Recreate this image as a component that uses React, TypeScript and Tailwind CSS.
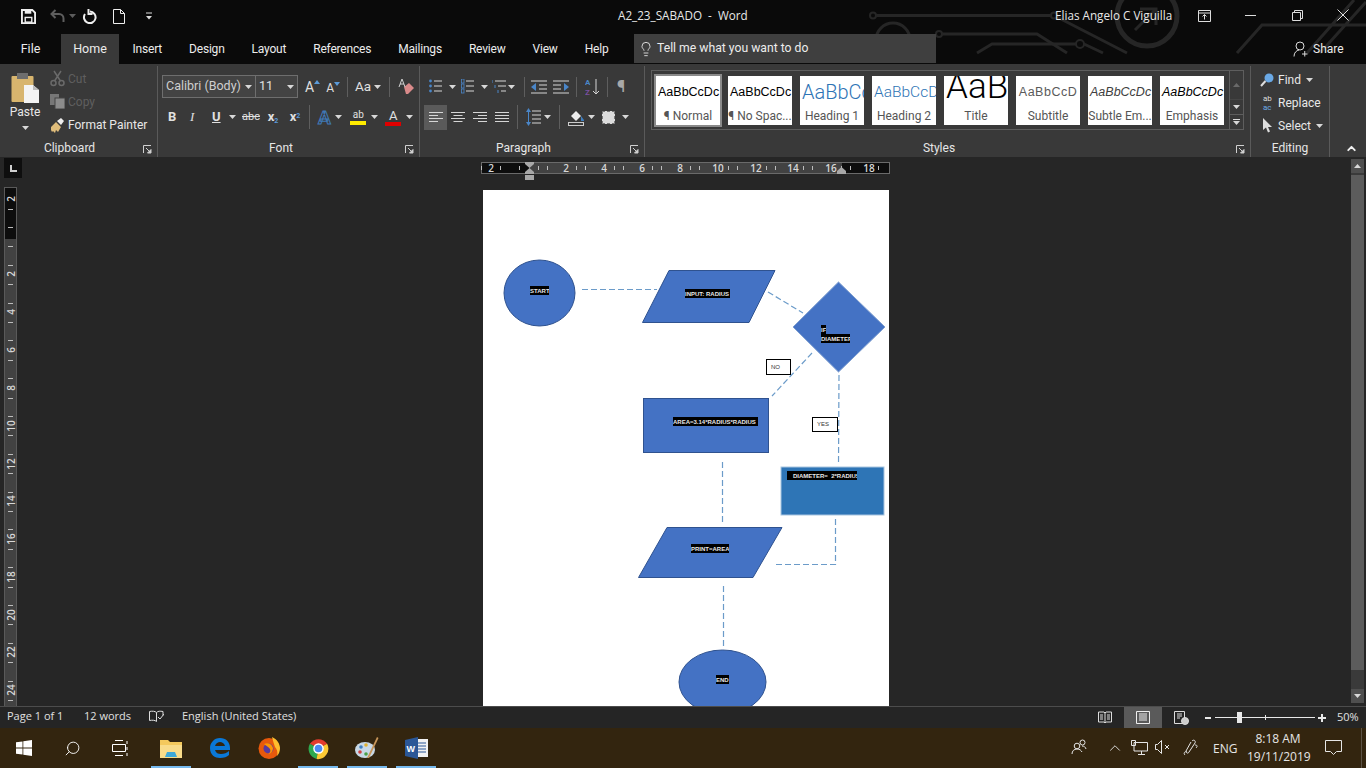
import React from "react";
import { Search, Lightbulb, ChevronUp } from "lucide-react";

const FONT = { fontFamily: '"Open Sans","Noto Sans",sans-serif' };
const UI = { fontFamily: 'Roboto,"Open Sans",sans-serif' };

function Caret({ className = "" }: { className?: string }) {
  return (
    <svg width="7" height="4" viewBox="0 0 7 4" className={"shrink-0 " + className}>
      <path d="M0 0h7L3.500 4z" fill="#d8d8d8" />
    </svg>
  );
}

function Launcher() {
  return (
    <svg width="9" height="9" viewBox="0 0 9 9" className="shrink-0">
      <path d="M.500 8V.500H8" fill="none" stroke="#d0d0d0" />
      <path d="M3 3l5 5M8 4.500V8H4.500z" fill="#d0d0d0" stroke="#d0d0d0" />
    </svg>
  );
}

function Group({ width, title, shift = 14, launcher = true, children }: { width: number; title: string; shift?: number; launcher?: boolean; children: React.ReactNode }) {
  return (
    <div className="relative flex h-full shrink-0 flex-col border-r border-[#5a5a5a]" style={{ width }}>
      <div className="min-h-0 flex-1">{children}</div>
      <div className="flex h-[17px] items-center justify-center pb-[2px] text-[12px] text-[#e6e6e6]" style={{ paddingRight: shift }}>
        {title}
      </div>
      {launcher && (
        <div className="absolute bottom-[3px] right-[5px]">
          <Launcher />
        </div>
      )}
    </div>
  );
}

function Lines({ kind }: { kind: "left" | "center" | "right" | "just" }) {
  const rows: [number, number][] =
    kind === "left"
      ? [[0, 14], [0, 9], [0, 14], [0, 9]]
      : kind === "center"
      ? [[0, 14], [2.500, 11.500], [0, 14], [2.500, 11.500]]
      : kind === "right"
      ? [[0, 14], [5, 14], [0, 14], [5, 14]]
      : [[0, 14], [0, 14], [0, 14], [0, 14]];
  return (
    <svg width="14" height="12" viewBox="0 0 14 12">
      {rows.map((r, i) => (
        <path key={i} d={`M${r[0]} ${1.500 + i * 3}H${r[1]}`} stroke="#d6d6d6" />
      ))}
    </svg>
  );
}

function ListIcon({ kind }: { kind: "bullet" | "num" | "multi" }) {
  return (
    <svg width="15" height="15" viewBox="0 0 15 15" className="shrink-0">
      {kind === "bullet" &&
        [2, 7, 12].map((y) => (
          <React.Fragment key={y}>
            <circle cx="1.500" cy={y} r="1.400" fill="#4a86c8" />
            <path d={`M5 ${y}H13`} stroke="#d6d6d6" />
          </React.Fragment>
        ))}
      {kind === "num" &&
        [2, 7, 12].map((y) => (
          <React.Fragment key={y}>
            <rect x="0.500" y={y - 2} width="2.500" height="4" fill="none" stroke="#4a86c8" strokeWidth="0.800" />
            <path d={`M5 ${y}H13`} stroke="#d6d6d6" />
          </React.Fragment>
        ))}
      {kind === "multi" && (
        <>
          <path d="M0 1v3" stroke="#4a86c8" />
          <path d="M3 2H14M6 7H14M9 12H14" stroke="#d6d6d6" />
          <path d="M3 6v3" stroke="#4a86c8" />
          <path d="M6 11v3" stroke="#4a86c8" />
        </>
      )}
    </svg>
  );
}

function StyleTile({ sample, label, cls, selected, light }: { sample: string; label: string; cls: string; selected?: boolean; light?: boolean }) {
  return (
    <div className={"relative h-[49px] w-[64px] shrink-0 bg-white " + (selected ? "outline outline-2 outline-[#8a8a8a]" : "")}>
      <div
        className={"h-[32px] overflow-hidden whitespace-nowrap px-[2px] text-center " + cls}
        style={{ fontFamily: light ? "Roboto,sans-serif" : '"Liberation Sans",sans-serif' }}
      >
        {sample}
      </div>
      <div className="text-center text-[12px] leading-[16px] text-[#555] whitespace-nowrap" style={UI}>
        {label}
      </div>
    </div>
  );
}

function TitleBar() {
  return (
    <div className="relative flex h-8 items-center text-[11.700px] text-[#e8e8e8]" style={FONT}>
      <svg width="15" height="15" viewBox="0 0 16 16" className="ml-[21px]">
        <path d="M1 1h11l3 3v11H1z" fill="none" stroke="#eee" strokeWidth="2" />
        <rect x="4" y="1" width="7" height="4" fill="#eee" />
        <rect x="4.500" y="9" width="7" height="5" fill="none" stroke="#eee" strokeWidth="1.500" />
      </svg>
      <svg width="15" height="14" viewBox="0 0 15 14" className="ml-[14px]">
        <path d="M5.500 1L1.500 5l4 4M2 5h7a4.500 4.500 0 0 1 4.500 4.500V13" fill="none" stroke="#5e5e5e" strokeWidth="2" />
      </svg>
      <Caret className="ml-[4px] opacity-40" />
      <svg width="15" height="15" viewBox="0 0 15 15" className="ml-[6px]">
        <path d="M8 2.500a5.800 5.800 0 1 1-5 2.500M6.500 0v5h4" fill="none" stroke="#eee" strokeWidth="2" />
      </svg>
      <svg width="12" height="15" viewBox="0 0 12 15" className="ml-[16px]">
        <path d="M.500.500h7l4 4v10h-11zM7.500.500v4h4" fill="none" stroke="#eee" />
      </svg>
      <svg width="8" height="8" viewBox="0 0 8 8" className="ml-[20px]">
        <path d="M1 1h6" stroke="#ddd" />
        <path d="M1 4h6L4 7.500z" fill="#ddd" />
      </svg>
      <div className="absolute left-[618px] top-[7px]">A2_23_SABADO&nbsp; -&nbsp; Word</div>
      <div className="absolute left-[1055px] top-[7px]">Elias Angelo C Viguilla</div>
      <svg width="13" height="12" viewBox="0 0 13 12" className="absolute left-[1198px] top-[10px]" fill="none" stroke="#ddd">
        <path d="M.500.500h12v11H.500zM.500 3h12M6.500 9.500v-5M4.500 6.500l2-2 2 2" />
      </svg>
      <div className="absolute left-[1245px] top-[15px] h-px w-[11px] bg-[#ddd]" />
      <svg width="11" height="11" viewBox="0 0 11 11" className="absolute left-[1292px] top-[10px]" fill="none" stroke="#ddd">
        <path d="M.500 2.500h8v8h-8zM2.500 2.500v-2h8v8h-2" />
      </svg>
      <svg width="12" height="12" viewBox="0 0 12 12" className="absolute left-[1337px] top-[9px]" fill="none" stroke="#ddd">
        <path d="M.500.500l11 11M11.500.500l-11 11" />
      </svg>
    </div>
  );
}

function TabBar() {
  const tabs = ["Insert", "Design", "Layout", "References", "Mailings", "Review", "View", "Help"];
  return (
    <div className="relative flex h-8 items-end text-[12px] text-[#ececec]" style={UI}>
      <div className="flex h-[30px] w-[61px] items-center justify-center text-[12.500px]">File</div>
      <div className="flex h-[30px] w-[58px] items-center justify-center bg-[#393939] text-[12.500px]">Home</div>
      <div className="flex h-[30px] items-center tracking-[-0.200px]">
        {tabs.map((t) => (
          <div key={t} className="px-[13.500px]">
            {t}
          </div>
        ))}
      </div>
      <div className="absolute left-[634px] top-[2px] flex h-[29px] w-[302px] items-center gap-[3px] bg-[#3f3f3f] pl-[4px] text-[12.200px]">
        <Lightbulb size={16} strokeWidth={1.300} />
        Tell me what you want to do
      </div>
      <div className="absolute left-[1293px] top-[8px] flex items-center gap-[5px] text-[12px]">
        <svg width="15" height="16" viewBox="0 0 15 16" fill="none" stroke="#ddd">
          <circle cx="7" cy="5" r="4" />
          <path d="M1 15.500c0-4 2.500-6 5-6.500M9 13h5.500M11.750 10v5.500" />
        </svg>
        Share
      </div>
    </div>
  );
}

function Clipboard() {
  return (
    <div className="flex h-full text-[12px]">
      <div className="flex w-[50px] flex-col items-center pt-[7px]">
        <svg width="28" height="30" viewBox="0 0 28 30">
          <rect x="0.500" y="3" width="22" height="26" rx="1" fill="#d8b56e" />
          <rect x="6" y="0" width="11" height="6" fill="#6e6e6e" />
          <path d="M13 12h9l6 5v13H13z" fill="#f4f4f4" />
          <path d="M22 12v5h6" fill="#bbb" />
        </svg>
        <div className="mt-[1px] leading-[16px] text-[#e8e8e8]">Paste</div>
        <Caret className="mt-[6px]" />
      </div>
      <div className="flex flex-col pt-[1px]">
        <div className="flex h-[23px] items-center gap-[3px] text-[#5f5f5f]">
          <svg width="15" height="17" viewBox="0 0 15 17" fill="none" stroke="#6a6a6a" strokeWidth="1.500">
            <circle cx="3.500" cy="13" r="2.500" />
            <circle cx="11.500" cy="13" r="2.500" />
            <path d="M4.500 11L11 1M10.500 11L4 1" />
          </svg>
          Cut
        </div>
        <div className="flex h-[23px] items-center gap-[3px] text-[#5f5f5f]">
          <svg width="15" height="15" viewBox="0 0 15 15" fill="#777">
            <rect x="0" y="0" width="9" height="11" />
            <rect x="5" y="4" width="10" height="11" fill="#8c8c8c" stroke="#444" />
          </svg>
          Copy
        </div>
        <div className="flex h-[23px] items-center gap-[3px] text-[#e8e8e8]">
          <svg width="15" height="16" viewBox="0 0 15 16">
            <path d="M1 10l5-5 5 5-3 5-2-2-1 3-2-2-1 1-1-2z" fill="#e0bd7b" />
            <path d="M7 4l4-3 3 3-3 4z" fill="#eee" />
          </svg>
          Format Painter
        </div>
      </div>
    </div>
  );
}

function GrowA({ up, size }: { up: boolean; size: number }) {
  return (
    <span className="relative inline-block leading-none" style={{ fontSize: size }}>
      A
      <svg width="6" height="4" viewBox="0 0 6 4" className="absolute -right-[6px] top-0">
        <path d={up ? "M0 4L3 0l3 4z" : "M0 0h6L3 4z"} fill="#5c9bd9" />
      </svg>
    </span>
  );
}

function Font() {
  return (
    <div className="flex h-full flex-col pl-[4px] text-[#e0e0e0]">
      <div className="mt-[9px] flex h-[23px] items-center">
        <div className="flex h-[23px] w-[94px] shrink-0 items-center justify-between border border-[#6e6e6e] bg-[#434343] px-[3px] text-[12.500px]">
          <span className="whitespace-nowrap text-[#cfcfcf]">Calibri (Body)</span>
          <Caret />
        </div>
        <div className="flex h-[23px] w-[42px] shrink-0 items-center justify-between border border-l-0 border-[#6e6e6e] bg-[#434343] px-[3px] text-[12.500px]">
          <span>11</span>
          <Caret />
        </div>
        <div className="flex w-[49px] shrink-0 items-center pl-[7px]">
          <GrowA up size={14} />
          <span className="ml-[12px]"><GrowA up={false} size={12} /></span>
        </div>
        <div className="h-[20px] w-px bg-[#5e5e5e]" />
        <div className="flex w-[41px] shrink-0 items-center gap-[3px] pl-[7px] text-[13.500px]">Aa<Caret /></div>
        <div className="h-[20px] w-px bg-[#5e5e5e]" />
        <svg width="16" height="18" viewBox="0 0 16 18" className="ml-[8px]">
          <path d="M6 9l5-4 5 5-6 6H8z" fill="#d98a8a" />
          <path d="M1 9L4 1l3 8M2 6h4" fill="none" stroke="#d0d0d0" />
        </svg>
      </div>
      <div className="mt-[7px] flex h-[24px] items-center text-[13px]">
        <span className="ml-[6px] w-[22px] font-bold">B</span>
        <span className="w-[22px] italic" style={{ fontFamily: '"Liberation Serif",serif' }}>I</span>
        <span className="w-[15px] font-bold underline">U</span>
        <Caret className="ml-[2px] mr-[6px]" />
        <span className="w-[20px] text-[11px] line-through">abc</span>
        <span className="w-[22px] text-center font-bold">x<sub className="text-[7px] text-[#5c9bd9]">2</sub></span>
        <span className="w-[22px] text-center font-bold">x<sup className="text-[7px] text-[#5c9bd9]">2</sup></span>
        <div className="ml-[3px] h-[24px] w-px bg-[#5e5e5e]" />
        <span className="ml-[8px] text-[19px] font-bold leading-none text-transparent [-webkit-text-stroke:1px_#3f78b5]">A</span>
        <Caret className="ml-[4px]" />
        <div className="ml-[8px] flex w-[17px] flex-col items-center">
          <span className="text-[10px] leading-[12px]">ab</span>
          <div className="h-[4px] w-[16px] bg-[#ffeb00]" />
        </div>
        <Caret className="ml-[4px]" />
        <div className="ml-[7px] flex w-[17px] flex-col items-center">
          <span className="text-[13px] leading-[13px]">A</span>
          <div className="h-[4px] w-[16px] bg-[#e00000]" />
        </div>
        <Caret className="ml-[4px]" />
      </div>
    </div>
  );
}

function Paragraph() {
  return (
    <div className="flex h-full flex-col pl-[9px]">
      <div className="mt-[9px] flex h-[23px] items-center">
        <ListIcon kind="bullet" />
        <Caret className="ml-[5px] mr-[5px]" />
        <ListIcon kind="num" />
        <Caret className="ml-[5px] mr-[4px]" />
        <ListIcon kind="multi" />
        <Caret className="ml-[1px] mr-[9px]" />
        <div className="h-[20px] w-px bg-[#5e5e5e]" />
        <svg width="16" height="14" viewBox="0 0 16 14" className="ml-[6px]">
          <path d="M0 1h16M8 5h8M8 9h8M0 13h16" stroke="#d6d6d6" />
          <path d="M0 7l5-4v8z" fill="#4a86c8" />
        </svg>
        <svg width="16" height="14" viewBox="0 0 16 14" className="ml-[6px]">
          <path d="M0 1h16M0 5h8M0 9h8M0 13h16" stroke="#d6d6d6" />
          <path d="M16 7l-5-4v8z" fill="#4a86c8" />
        </svg>
        <div className="ml-[7px] h-[20px] w-px bg-[#5e5e5e]" />
        <svg width="15" height="20" viewBox="0 0 15 20" className="ml-[8px]">
          <text x="0" y="8" fontSize="8" fill="#4a86c8" fontWeight="700">A</text>
          <text x="0" y="18" fontSize="8" fill="#7a4fa0" fontWeight="700">Z</text>
          <path d="M11 2v15M8 14l3 3 3-3" stroke="#d6d6d6" fill="none" />
        </svg>
        <div className="ml-[7px] h-[20px] w-px bg-[#5e5e5e]" />
        <span className="ml-[9px] text-[17px] leading-none text-[#a8a8a8]">¶</span>
      </div>
      <div className="mt-[7px] flex h-[24px] items-center">
        <div className="-ml-[5px] flex h-[25px] w-[23px] items-center justify-center bg-[#5a5a5a]"><Lines kind="left" /></div>
        <div className="flex w-[22px] justify-center"><Lines kind="center" /></div>
        <div className="flex w-[22px] justify-center"><Lines kind="right" /></div>
        <div className="flex w-[22px] justify-center"><Lines kind="just" /></div>
        <div className="ml-[4px] h-[24px] w-px bg-[#5e5e5e]" />
        <svg width="15" height="18" viewBox="0 0 15 18" className="ml-[8px]">
          <path d="M6 3h9M6 7h9M6 11h9M6 15h9" stroke="#d6d6d6" />
          <path d="M2.500 0l2.500 4H0zM2.500 18L0 14h5zM2 3h1v12H2z" fill="#4a86c8" />
        </svg>
        <Caret className="ml-[3px]" />
        <div className="ml-[8px] h-[24px] w-px bg-[#5e5e5e]" />
        <svg width="17" height="18" viewBox="0 0 17 18" className="ml-[8px]">
          <path d="M3 8l5-5 5 5-5 5z" fill="#eee" />
          <path d="M13 8l3 4v1h-3z" fill="#3f7fc0" />
          <rect x="0.500" y="14.500" width="15" height="3" fill="none" stroke="#ccc" />
        </svg>
        <Caret className="ml-[3px]" />
        <div className="ml-[7px] h-[13px] w-[13px] border border-dashed border-[#777] bg-[#dcdcdc]" />
        <Caret className="ml-[7px]" />
      </div>
    </div>
  );
}

function Styles() {
  return (
    <div className="pl-[6px] pt-[4px]">
      <div className="flex h-[60px] w-[593px] border border-[#5e5e5e]">
        <div className="flex flex-1 gap-[8px] pl-[4px] pt-[5px]">
          <StyleTile selected sample="AaBbCcDc" label="¶ Normal" cls="text-[12.500px] leading-[33px] text-black" />
          <StyleTile sample="AaBbCcDc" label="¶ No Spac..." cls="text-[12.500px] leading-[33px] text-black" />
          <StyleTile light sample="AaBbCc" label="Heading 1" cls="text-[20px] font-light leading-[33px] text-[#2e74b5]" />
          <StyleTile light sample="AaBbCcD" label="Heading 2" cls="text-[15.500px] font-light leading-[33px] text-[#2e74b5]" />
          <StyleTile light sample="AaB" label="Title" cls="text-[35px] font-light leading-[22px] text-black" />
          <StyleTile sample="AaBbCcD" label="Subtitle" cls="text-[12.500px] tracking-[.5px] leading-[33px] text-[#5a5a5a]" />
          <StyleTile sample="AaBbCcDc" label="Subtle Em..." cls="text-[12.500px] italic leading-[33px] text-[#404040]" />
          <StyleTile sample="AaBbCcDc" label="Emphasis" cls="text-[12.500px] italic leading-[33px] text-black" />
        </div>
        <div className="flex w-[14px] flex-col border-l border-[#5e5e5e]">
          <div className="flex h-[29px] items-center justify-center border-b border-[#5e5e5e] opacity-30"><Caret className="rotate-180" /></div>
          <div className="flex h-[15px] items-center justify-center border-b border-[#5e5e5e]"><Caret /></div>
          <div className="flex flex-1 flex-col items-center justify-center gap-[1px]"><div className="h-px w-[7px] bg-[#ddd]" /><Caret /></div>
        </div>
      </div>
    </div>
  );
}

function EditRow({ icon, text, caret }: { icon: React.ReactNode; text: string; caret?: boolean }) {
  return (
    <div className="flex h-[23px] items-center gap-[3px] text-[12px] text-[#e8e8e8]">
      <div className="flex w-[16px] justify-center">{icon}</div>
      {text}
      {caret && <Caret className="ml-[2px]" />}
    </div>
  );
}

function Editing() {
  return (
    <div className="pl-[8px] pt-[2px]">
      <EditRow
        caret
        text="Find"
        icon={
          <svg width="14" height="14" viewBox="0 0 14 14">
            <circle cx="9" cy="5" r="4.500" fill="#6aa9e6" />
            <path d="M5.500 8L1 13" stroke="#ddd" strokeWidth="2" />
          </svg>
        }
      />
      <EditRow
        text="Replace"
        icon={
          <svg width="15" height="18" viewBox="0 0 15 18">
            <text x="3" y="7" fontSize="8" fill="#ddd">ab</text>
            <text x="3" y="16" fontSize="8" fill="#6aa9e6">ac</text>
          </svg>
        }
      />
      <EditRow
        caret
        text="Select"
        icon={
          <svg width="11" height="15" viewBox="0 0 11 15">
            <path d="M1 0v12l3-2.500 2 5 2-1-2-4.500h4z" fill="#ddd" />
          </svg>
        }
      />
    </div>
  );
}

function Ribbon() {
  return (
    <div className="relative flex h-[93px] bg-[#393939] pt-[2px]" style={UI}>
      <Group width={158} title="Clipboard" shift={18}><Clipboard /></Group>
      <Group width={262} title="Font" shift={15}><Font /></Group>
      <Group width={225} title="Paragraph" shift={17}><Paragraph /></Group>
      <Group width={606} title="Styles" shift={17}><Styles /></Group>
      <Group width={79} title="Editing" shift={0} launcher={false}><Editing /></Group>
      <ChevronUp size={13} strokeWidth={3.500} color="#f0f0f0" className="absolute left-[1345px] top-[78px]" />
    </div>
  );
}

const HNUMS: [number, string][] = [
  [491, "2"], [566, "2"], [604, "4"], [642, "6"], [680, "8"], [718, "10"], [756, "12"], [793, "14"], [831, "16"], [869, "18"],
];

function HRuler() {
  const ticks = [481, 500, 519, 547, 585, 623, 661, 699, 737, 775, 812, 850];
  const ticks2 = [538, 576, 614, 652, 690, 728, 766, 803, 841, 878];
  return (
    <div className="absolute left-[481px] top-[5px] flex h-[12px] w-[409px] border border-[#6a6a6a] bg-[#424242]" style={FONT}>
      <div className="h-full w-[47px] bg-[#0d0d0d]" />
      <div className="flex-1" />
      <div className="h-full w-[47px] bg-[#0d0d0d]" />
      {[...ticks, ...ticks2].map((x) => (
        <div key={x} className="absolute top-[3px] h-[4px] w-px bg-[#bdbdbd]" style={{ left: x - 482 }} />
      ))}
      {HNUMS.map(([x, n]) => (
        <div key={x} className="absolute top-[-2px] w-[20px] text-center text-[10px] font-semibold leading-[14px] text-[#d8d8d8]" style={{ left: x - 492 }}>
          {n}
        </div>
      ))}
      <svg width="11" height="18" viewBox="0 0 11 18" className="absolute left-[42px] top-[-1px] overflow-visible">
        <path d="M1 0h9v2L5.500 6 1 2z" fill="#a8a8a8" />
        <path d="M5.500 6L10 10v2H1v-2z" fill="#a8a8a8" />
        <rect x="1" y="13" width="9" height="5" fill="#a8a8a8" />
      </svg>
      <svg width="9" height="7" viewBox="0 0 9 7" className="absolute left-[355px] top-[4px]">
        <path d="M4.500 0L9 4v3H0V4z" fill="#a8a8a8" />
      </svg>
    </div>
  );
}

const VNUMS: [number, string][] = [
  [199, "2"], [274, "2"], [312, "4"], [350, "6"], [388, "8"], [426, "10"], [464, "12"], [501, "14"], [539, "16"], [577, "18"], [615, "20"], [652, "22"], [690, "24"],
];

function VRuler() {
  const ticks: number[] = [];
  for (let i = 0; i < 14; i++) {
    ticks.push(208.500 + i * 37.800);
    ticks.push(227 + i * 37.800);
  }
  return (
    <div className="absolute left-[4px] top-[30px] h-[520px] w-[13px] overflow-hidden border-x border-t border-[#5a5a5a] bg-[#424242]" style={FONT}>
      <div className="h-[51px] w-full bg-[#0d0d0d]" />
      {ticks.map((y) => (
        <div key={y} className="absolute left-[3px] h-px w-[5px] bg-[#bdbdbd]" style={{ top: y - 188 }} />
      ))}
      {VNUMS.map(([y, n]) => (
        <div key={y} className="absolute left-[-4px] w-[20px] -rotate-90 text-center text-[10px] font-semibold leading-[12px] text-[#d8d8d8]" style={{ top: y - 194 }}>
          {n}
        </div>
      ))}
    </div>
  );
}

function Label({ x, y, w, h, children, cls = "" }: { x: number; y: number; w: number; h: number; children: React.ReactNode; cls?: string }) {
  return (
    <div
      className={"absolute flex items-center overflow-hidden whitespace-nowrap bg-black text-[6px] font-bold leading-none text-[#e8e8e8] " + cls}
      style={{ left: x - 483, top: y - 190, width: w, height: h, fontFamily: '"Liberation Sans",sans-serif' }}
    >
      {children}
    </div>
  );
}

function BoxLabel({ x, y, w, h, children }: { x: number; y: number; w: number; h: number; children: React.ReactNode }) {
  return (
    <div
      className="absolute flex items-center whitespace-nowrap border border-black bg-white pl-[4px] text-[6px] text-[#333]"
      style={{ left: x - 483, top: y - 190, width: w, height: h, fontFamily: '"Liberation Sans",sans-serif' }}
    >
      {children}
    </div>
  );
}

function Page() {
  const stroke = "#2f528f";
  const dash = { fill: "none", stroke: "#6b9bc9", strokeWidth: 1.200, strokeDasharray: "6 3" };
  return (
    <div className="absolute left-[483px] top-[33px] h-[516px] w-[406px] overflow-hidden bg-white">
      <svg width="406" height="516" viewBox="483 190 406 516" className="absolute inset-0">
        <path d="M582 289.500H657" {...dash} />
        <path d="M768 292L803 313" {...dash} />
        <path d="M812 353L772 396" {...dash} />
        <path d="M839 375L838.500 464" {...dash} />
        <path d="M722.500 462V523" {...dash} />
        <path d="M835.500 519V564.500H774" {...dash} />
        <path d="M723.500 586V647" {...dash} />
        <ellipse cx="539.500" cy="293" rx="35.500" ry="33" fill="#4472c4" stroke={stroke} />
        <path d="M669 270.500H775L749 322.500H642.500z" fill="#4472c4" stroke={stroke} />
        <path d="M838.500 282L885 327L838.500 372L793 327z" fill="#4472c4" stroke="#7f9fd0" />
        <rect x="643.500" y="398.500" width="125" height="54" fill="#4472c4" stroke={stroke} />
        <rect x="781" y="467" width="103" height="48" fill="#2e75b6" stroke="#a8c5e0" />
        <path d="M667 527.500H782L753 577.500H638.500z" fill="#4472c4" stroke={stroke} />
        <ellipse cx="722.500" cy="682" rx="43.500" ry="32" fill="#4472c4" stroke={stroke} />
      </svg>
      <Label x={530} y={286} w={19} h={9}>START</Label>
      <Label x={685} y={289} w={45} h={9}>INPUT: RADIUS</Label>
      <Label x={821} y={325} w={5} h={9}>IF</Label>
      <Label x={821} y={334} w={29} h={9}>DIAMETER</Label>
      <Label x={673} y={417} w={85} h={9}>AREA=3.14*RADIUS*RADIUS</Label>
      <Label x={787} y={471} w={70} h={9} cls="pl-[6px]">DIAMETER=&nbsp; 2*RADIUS</Label>
      <Label x={691} y={544} w={38} h={9}>PRINT=AREA</Label>
      <Label x={716} y={675} w={13} h={9}>END</Label>
      <BoxLabel x={766} y={359} w={25} h={16}>NO</BoxLabel>
      <BoxLabel x={812} y={417} w={26} h={15}>YES</BoxLabel>
    </div>
  );
}

function Scrollbar() {
  return (
    <div className="absolute left-[1351px] top-[2px] flex h-[544px] w-[13px] flex-col bg-[#3a3a3a]">
      <div className="flex h-[14px] items-center justify-center bg-[#4f4f4f]"><Caret className="rotate-180" /></div>
      <div className="mt-[2px] h-[495px] bg-[#5c5c5c]" />
      <div className="flex-1" />
      <div className="flex h-[14px] items-center justify-center bg-[#4f4f4f]"><Caret /></div>
    </div>
  );
}

function Document() {
  return (
    <div className="relative h-[549px] overflow-hidden bg-[#262626]">
      <div className="absolute left-[4px] top-[1px] flex h-[20px] w-[18px] items-center justify-center bg-[#0e0e0e]">
        <svg width="7" height="7" viewBox="0 0 7 7"><path d="M0 0h2v5h5v2H0z" fill="#cfcfcf" /></svg>
      </div>
      <HRuler />
      <VRuler />
      <Page />
      <Scrollbar />
    </div>
  );
}

function StatusBar() {
  return (
    <div className="relative flex h-[22px] items-center border-t border-[#4c4c4c] bg-[#252525] pb-[2px] text-[11px] text-[#e0e0e0]" style={FONT}>
      <span className="ml-[7px] w-[77px]">Page 1 of 1</span>
      <span className="w-[65px]">12 words</span>
      <svg width="15" height="13" viewBox="0 0 15 13" fill="none" stroke="#ddd">
        <path d="M7.500 2.500C6 1 3 1 .500 1.500v9c2.500-.5 5.500-.5 7 1M7.500 11.500V2.500C9 1 11 1 14 1.500v4M9 7l2 2 4-5" />
      </svg>
      <span className="ml-[18px]">English (United States)</span>
      <svg width="14" height="13" viewBox="0 0 14 13" fill="none" stroke="#ddd" className="absolute left-[1098px] top-[4px]">
        <path d="M.500 1h5.500l1 1 1-1h5.500v10H8l-1 1-1-1H.500zM7 2v9M2 4h3M2 6h3M2 8h3M9 4h3M9 6h3M9 8h3" />
      </svg>
      <div className="absolute left-[1124px] top-0 flex h-[21px] w-[38px] items-center justify-center bg-[#5a5a5a]">
        <svg width="14" height="13" viewBox="0 0 14 13" fill="none" stroke="#eee">
          <path d="M.500.500h13v12h-13zM3 3h8M3 5h8M3 7h8M3 9h8" />
        </svg>
      </div>
      <svg width="15" height="14" viewBox="0 0 15 14" fill="none" stroke="#ddd" className="absolute left-[1174px] top-[4px]">
        <path d="M.500.500h10v12h-10zM3 3h5M3 5h5M3 7h3" />
        <circle cx="11" cy="10" r="3.500" fill="#ccc" />
      </svg>
      <div className="absolute left-[1205px] top-[10px] h-[2px] w-[6px] bg-[#e8e8e8]" />
      <div className="absolute left-[1215px] top-[10px] h-px w-[100px] bg-[#e8e8e8]" />
      <div className="absolute left-[1265px] top-[8px] h-[5px] w-px bg-[#e8e8e8]" />
      <div className="absolute left-[1237px] top-[5px] h-[11px] w-[5px] bg-[#e8e8e8]" />
      <div className="absolute left-[1318px] top-[10px] h-[2px] w-[8px] bg-[#e8e8e8]" />
      <div className="absolute left-[1321px] top-[7px] h-[8px] w-[2px] bg-[#e8e8e8]" />
      <span className="absolute left-[1337px] top-[2px]">50%</span>
    </div>
  );
}

function Taskbar() {
  return (
    <div className="relative flex h-10 items-center bg-[#33250f] text-[12px] text-[#e6e6e6]" style={FONT}>
      <svg width="16" height="16" viewBox="0 0 16 16" className="ml-[16px]" fill="#fff">
        <path d="M0 2.300l6.500-.9v6.200H0zM7.300 1.300L16 0v7.600H7.300zM0 8.400h6.500v6.200L0 13.700zM7.300 8.400H16V16l-8.700-1.200z" />
      </svg>
      <Search size={17} strokeWidth={1.300} color="#fff" className="ml-[32px] -scale-x-100" />
      <svg width="17" height="17" viewBox="0 0 17 17" fill="none" stroke="#fff" className="ml-[31px]">
        <path d="M3 .500h8M.500 4.500h13v7H.500zM3 15.500h8M15 1v3M15 7v3M15 13v3" />
      </svg>
      <div className="relative ml-[22px] flex h-10 w-[40px] items-center justify-center">
        <svg width="22" height="19" viewBox="0 0 22 19">
          <path d="M0 1h8l2 2h12v16H0z" fill="#f4c95d" />
          <path d="M0 6h22v13H0z" fill="#f9dc8a" />
          <path d="M7 13h8l2 5H5z" fill="#3ea8d8" />
        </svg>
        <div className="absolute bottom-0 h-[2px] w-full bg-[#76b9ed]" />
      </div>
      <div className="ml-[9px] flex w-[40px] justify-center">
        <svg width="22" height="22" viewBox="0 0 22 22">
          <path d="M11 1C5 1 1 6 1 11c0 7 5 10 10 10 4 0 7-1 9-3v-4c-2 2-5 3-8 3-3 0-5-1-6-4h15v-2C21 5 17 1 11 1zM6 9c1-3 3-4 5-4s4 1 5 4z" fill="#0a78d7" />
        </svg>
      </div>
      <div className="ml-[9px] flex w-[40px] justify-center">
        <svg width="24" height="24" viewBox="0 0 24 24">
          <circle cx="12" cy="12.500" r="10.500" fill="#e8590c" />
          <path d="M15 1c5 2 8 7 8 11 0 3-1 6-3 8 1-4 0-7-2-9-1-3-2-6-3-10z" fill="#ffbd2e" />
          <circle cx="11.500" cy="12.500" r="5" fill="#5a3a9e" />
          <path d="M7 8c4-2 8 0 9 4 0 3-2 6-5 6 2-1 3-3 2-5-1-2-4-3-6-5z" fill="#ff9500" />
        </svg>
      </div>
      <div className="relative ml-[9px] flex h-10 w-[40px] items-center justify-center">
        <svg width="23" height="23" viewBox="0 0 24 24">
          <path d="M12 12L3 7a11 11 0 0 1 18 0z" fill="#e33b2e" />
          <path d="M12 12L3 7a11 11 0 0 0 7 16z" fill="#2fa84f" />
          <path d="M12 12l9-5a11 11 0 0 1-11 16z" fill="#fcc934" />
          <circle cx="12" cy="12" r="5.500" fill="#fff" />
          <circle cx="12" cy="12" r="4" fill="#4a8af4" />
        </svg>
        <div className="absolute bottom-0 h-[2px] w-full bg-[#76b9ed]" />
      </div>
      <div className="relative ml-[9px] flex h-10 w-[40px] items-center justify-center">
        <svg width="24" height="24" viewBox="0 0 24 24">
          <ellipse cx="10" cy="14" rx="10" ry="8" fill="#c8d8e6" />
          <circle cx="6" cy="11" r="1.800" fill="#3f7fc0" />
          <circle cx="11" cy="9" r="1.800" fill="#e0b030" />
          <circle cx="5" cy="16" r="1.800" fill="#d04040" />
          <circle cx="11" cy="18" r="1.800" fill="#48a048" />
          <path d="M12 22L22 1l1.500 1L14 22z" fill="#c8965a" />
        </svg>
        <div className="absolute bottom-0 h-[2px] w-full bg-[#76b9ed]" />
      </div>
      <div className="relative ml-[9px] flex h-10 w-[40px] items-center justify-center">
        <svg width="23" height="22" viewBox="0 0 23 22">
          <path d="M9 2h14v18H9z" fill="#f2f2f2" />
          <path d="M13 6h8M13 9h8M13 12h8M13 15h8" stroke="#2b5797" />
          <path d="M0 3l13-3v22L0 19z" fill="#2b5797" />
          <text x="1.500" y="15" fontSize="9" fontWeight="700" fill="#fff" style={{ fontFamily: '"Liberation Sans",sans-serif' }}>W</text>
        </svg>
        <div className="absolute bottom-0 h-[2px] w-full bg-[#76b9ed]" />
      </div>

      <svg width="16" height="16" viewBox="0 0 16 16" fill="none" stroke="#e6e6e6" className="absolute left-[1071px] top-[11px]">
        <circle cx="6" cy="7" r="2.800" />
        <circle cx="11.500" cy="3.500" r="2.500" />
        <path d="M1 15c0-3 2-5 5-5s4 1.500 5 3M11 7c2 0 3.500 1 4 3" />
      </svg>
      <ChevronUp size={18} strokeWidth={1.200} color="#e6e6e6" className="absolute left-[1106px] top-[11px]" />
      <svg width="17" height="15" viewBox="0 0 17 15" fill="none" stroke="#e6e6e6" className="absolute left-[1131px] top-[12px]">
        <path d="M3 2.500H16.500V11H3zM.500.500h4v5h-4zM7 14.500h7M10.500 11v3" />
      </svg>
      <svg width="16" height="14" viewBox="0 0 16 14" fill="none" stroke="#e6e6e6" className="absolute left-[1155px] top-[12px]">
        <path d="M.500 4.500h2L6.500.500v13l-4-4h-2zM10 5l4 4M14 5l-4 4" />
      </svg>
      <svg width="17" height="18" viewBox="0 0 17 18" fill="none" stroke="#e6e6e6" className="absolute left-[1183px] top-[11px]">
        <path d="M9 2c2-2 4 0 3 2L6 13c-1 2-3 1-3-1l5-9M2 16c-2-2 0-4 2-3M12 6c2 0 3 1 1 3" />
      </svg>
      <span className="absolute left-[1213px] top-[12px]">ENG</span>
      <div className="absolute left-[1247px] top-[2px] w-[62px] text-center text-[12px] leading-[18px]">
        <div>8:18 AM</div>
        <div>19/11/2019</div>
      </div>
      <svg width="17" height="16" viewBox="0 0 17 16" fill="none" stroke="#e6e6e6" className="absolute left-[1325px] top-[12px]">
        <path d="M.500.500h16v11h-5l-3 3-3-3h-5z" />
      </svg>
      <div className="absolute left-[1361px] top-0 h-10 w-px bg-[#5c5244]" />
    </div>
  );
}

export default function App() {
  return (
    <div className="h-[768px] w-[1366px] overflow-hidden bg-[#262626]" style={FONT}>
      <div className="relative h-16 overflow-hidden bg-[#0a0a0a]">
        <svg className="absolute inset-0" width="1366" height="64" viewBox="0 0 1366 64" fill="none" stroke="#262626" strokeWidth="3">
          <path d="M876 15.500H1052M1057 17L1127 53" />
          <circle cx="873" cy="15.500" r="3" strokeWidth="2" />
          <circle cx="1054" cy="15.500" r="3" strokeWidth="2" />
          <circle cx="893" cy="40" r="17" />
          <path d="M942 34H1037L1067 53" />
          <circle cx="939" cy="34" r="3" strokeWidth="2" />
          <path d="M977 53L992 44H1076M1084 44L1103 53" />
          <circle cx="1080" cy="44" r="4" strokeWidth="2" />
          <circle cx="1147" cy="16" r="30" strokeWidth="5" />
          <path d="M1135 30L1155 10M1140 9H1156V25" />
          <path d="M1237 53L1262 25H1366M1307 53L1354 0M1320 53L1366 2" />
        </svg>
        <TitleBar />
        <TabBar />
      </div>
      <Ribbon />
      <Document />
      <StatusBar />
      <Taskbar />
    </div>
  );
}
